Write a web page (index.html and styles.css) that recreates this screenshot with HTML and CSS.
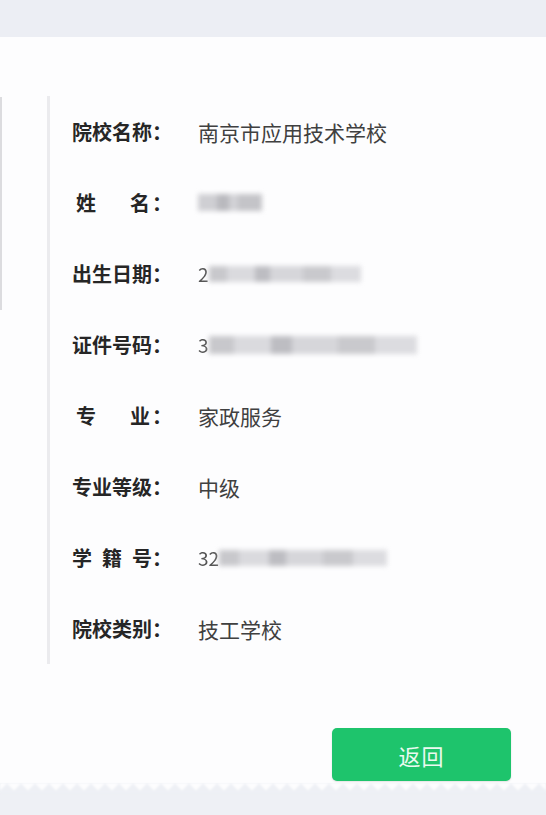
FILE: index.html
```html
<!DOCTYPE html>
<html lang="zh-CN">
<head>
<meta charset="utf-8">
<title>学籍信息</title>
<link rel="stylesheet" href="styles.css">
</head>
<body>
<div class="page">
  <div class="topbar"></div>
  <div class="card">
    <div class="content">
      <div class="stub"></div>
      <div class="info">
        <div class="row"><span class="label"><span class="name">院校名称</span>：</span><span class="value">南京市应用技术学校</span></div>
        <div class="row"><span class="label"><span class="name pad">姓名</span>：</span><span class="value"><span class="mask m-name"></span></span></div>
        <div class="row"><span class="label"><span class="name">出生日期</span>：</span><span class="value"><span class="lead">2</span><span class="mask m-birth"></span></span></div>
        <div class="row"><span class="label"><span class="name">证件号码</span>：</span><span class="value"><span class="lead">3</span><span class="mask m-id"></span></span></div>
        <div class="row"><span class="label"><span class="name pad">专业</span>：</span><span class="value">家政服务</span></div>
        <div class="row"><span class="label"><span class="name">专业等级</span>：</span><span class="value">中级</span></div>
        <div class="row"><span class="label"><span class="name">学籍号</span>：</span><span class="value"><span class="lead">32</span><span class="mask m-no"></span></span></div>
        <div class="row"><span class="label"><span class="name">院校类别</span>：</span><span class="value">技工学校</span></div>
      </div>
    </div>
    <div class="actions">
      <button class="btn" type="button">返回</button>
    </div>
  </div>
  <div class="edge"></div>
</div>
</body>
</html>
```

FILE: styles.css
```css
html, body {
  margin: 0;
  padding: 0;
}
body {
  width: 546px;
  height: 815px;
  overflow: hidden;
  background: #eef0f5;
  font-family: "Noto Sans CJK SC", "Noto Sans", sans-serif;
}
.page {
  display: flex;
  flex-direction: column;
  height: 815px;
}
.topbar {
  height: 37px;
  background: #eceef4;
  flex: none;
}
.card {
  background: #fdfdfe;
  padding-top: 59px;
  flex: none;
  height: 746px;
  box-sizing: border-box;
}
.content {
  display: flex;
  align-items: flex-start;
}
.stub {
  width: 2px;
  height: 213px;
  background: #dcdcdf;
  margin-right: 45px;
  margin-top: 1px;
}
.info {
  border-left: 3px solid #ebebee;
  padding-left: 22px;
}
.row {
  height: 71px;
  display: flex;
  align-items: center;
  line-height: 26px;
}
.label {
  font-size: 20px;
  font-weight: 700;
  color: #262626;
  width: 126px;
  flex: none;
  white-space: nowrap;
}
.name {
  display: inline-block;
  width: 80px;
  text-align: justify;
  text-align-last: justify;
  vertical-align: top;
}
.name.pad {
  padding: 0 2px 0 4px;
  width: 74px;
}
.value {
  font-size: 21px;
  color: #404040;
  display: flex;
  align-items: center;
}
.lead {
  color: #555;
  filter: blur(0.6px);
  font-size: 19px;
}
.mask {
  display: inline-block;
  height: 16px;
  filter: blur(2.5px);
  background: linear-gradient(90deg, #c8c8cc 0 12%, #dadade 12% 30%, #bdbdc2 30% 40%, #d6d6da 40% 62%, #c9c9cd 62% 80%, #dcdce0 80% 100%);
}
.m-name {
  width: 64px;
  height: 17px;
  background: linear-gradient(90deg, #cfcfd3 0 30%, #b9b9be 30% 48%, #d2d2d6 48% 62%, #c4c4c8 62% 100%);
}
.m-birth {
  width: 152px;
}
.m-id {
  width: 208px;
  height: 18px;
}
.m-no {
  width: 168px;
}
.actions {
  display: flex;
  justify-content: flex-end;
  padding-right: 35px;
  margin-top: 64px;
}
.btn {
  width: 179px;
  height: 53px;
  border: none;
  border-radius: 5px;
  background: #1ec46c;
  color: #eafaf0;
  font-family: "Noto Sans CJK SC", sans-serif;
  font-size: 22px;
  letter-spacing: 1px;
  box-shadow: 0 1px 2px rgba(0, 0, 0, 0.12);
}
.edge {
  height: 10px;
  flex: none;
  background:
    linear-gradient(135deg, #fdfdfe 33%, transparent 33%) 0 0 / 14px 10px repeat-x,
    linear-gradient(225deg, #fdfdfe 33%, transparent 33%) 0 0 / 14px 10px repeat-x,
    #eef0f5;
  filter: blur(0.8px);
}
```
